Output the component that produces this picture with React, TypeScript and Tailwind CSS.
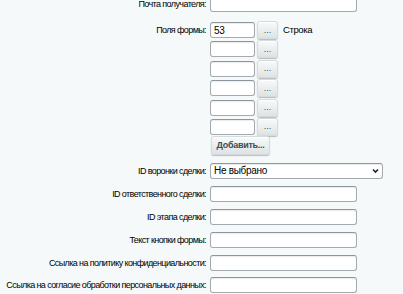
const fieldRows = ['53', '', '', '', '', '']

const textRows = [
  'ID ответственного сделки:',
  'ID этапа сделки:',
  'Текст кнопки формы:',
  'Ссылка на политику конфиденциальности:',
  'Ссылка на согласие обработки персональных данных:',
]

const inputCls =
  'block h-[16px] rounded-[3px] border border-[#a4abb0] border-t-[#8d969c] bg-white px-[3px] text-[10px] tracking-[-0.3px] text-black shadow-[inset_0_1px_1px_rgba(0,0,0,0.08)] outline-none'

const btnCls =
  'flex items-center justify-center rounded-[3px] bg-gradient-to-b from-[#f8fafa] to-[#dde3e5] text-[#3f4b54] shadow-[0_1px_1px_rgba(0,0,0,0.25),inset_0_1px_0_#fff] border border-[#d5dadc]'

function Label({ children }: { children: React.ReactNode }) {
  return (
    <div className="w-[210px] shrink-0 whitespace-nowrap pr-[4px] text-right text-[9px] leading-[16px] tracking-[-0.6px] text-black">
      {children}
    </div>
  )
}

export default function App() {
  return (
    <div className="h-[294px] overflow-hidden bg-[#f5f9f9] font-['Liberation_Sans',Arial,sans-serif]">
      <div className="-mt-[4px] flex flex-col">
        <div className="flex h-[16px] items-start">
          <Label>Почта получателя:</Label>
          <input className={`${inputCls} w-[147px]`} defaultValue="" />
        </div>

        <div className="mt-[9px] flex items-start">
          <div className="pt-[1px]">
            <Label>Поля формы:</Label>
          </div>
          <div className="flex flex-col">
            {fieldRows.map((v, i) => (
              <div key={i} className="flex h-[19.4px] items-start">
                <input className={`${inputCls} mt-[1px] w-[45px]`} defaultValue={v} />
                <button className={`${btnCls} ml-[2px] h-[18px] w-[21px] text-[9px] leading-none`}>...</button>
                {i === 0 && (
                  <span className="ml-[5px] mt-[1px] text-[9.5px] leading-[16px] tracking-[-0.4px] text-black">Строка</span>
                )}
              </div>
            ))}
            <button className={`${btnCls} -mt-[1px] ml-[1px] h-[19px] w-[59px] text-[9px] font-bold tracking-[-0.3px]`}>
              Добавить...
            </button>
          </div>
        </div>

        <div className="mt-[8px] flex h-[16px] items-start">
          <Label>ID воронки сделки:</Label>
          <div className="relative flex">
            <select className={`${inputCls} w-[173px] appearance-none py-0 pr-[14px] leading-[14px]`}>
              <option>Не выбрано</option>
            </select>
            <svg className="pointer-events-none absolute right-[4px] top-[5px]" width="7" height="6" viewBox="0 0 7 6">
              <path d="M1 1.5 L3.5 4 L6 1.5" fill="none" stroke="#222" strokeWidth="1.6" />
            </svg>
          </div>
        </div>

        {textRows.map((t) => (
          <div key={t} className="mt-[6.8px] flex h-[16px] items-start">
            <Label>{t}</Label>
            <input className={`${inputCls} w-[147px]`} defaultValue="" />
          </div>
        ))}
      </div>
    </div>
  )
}
